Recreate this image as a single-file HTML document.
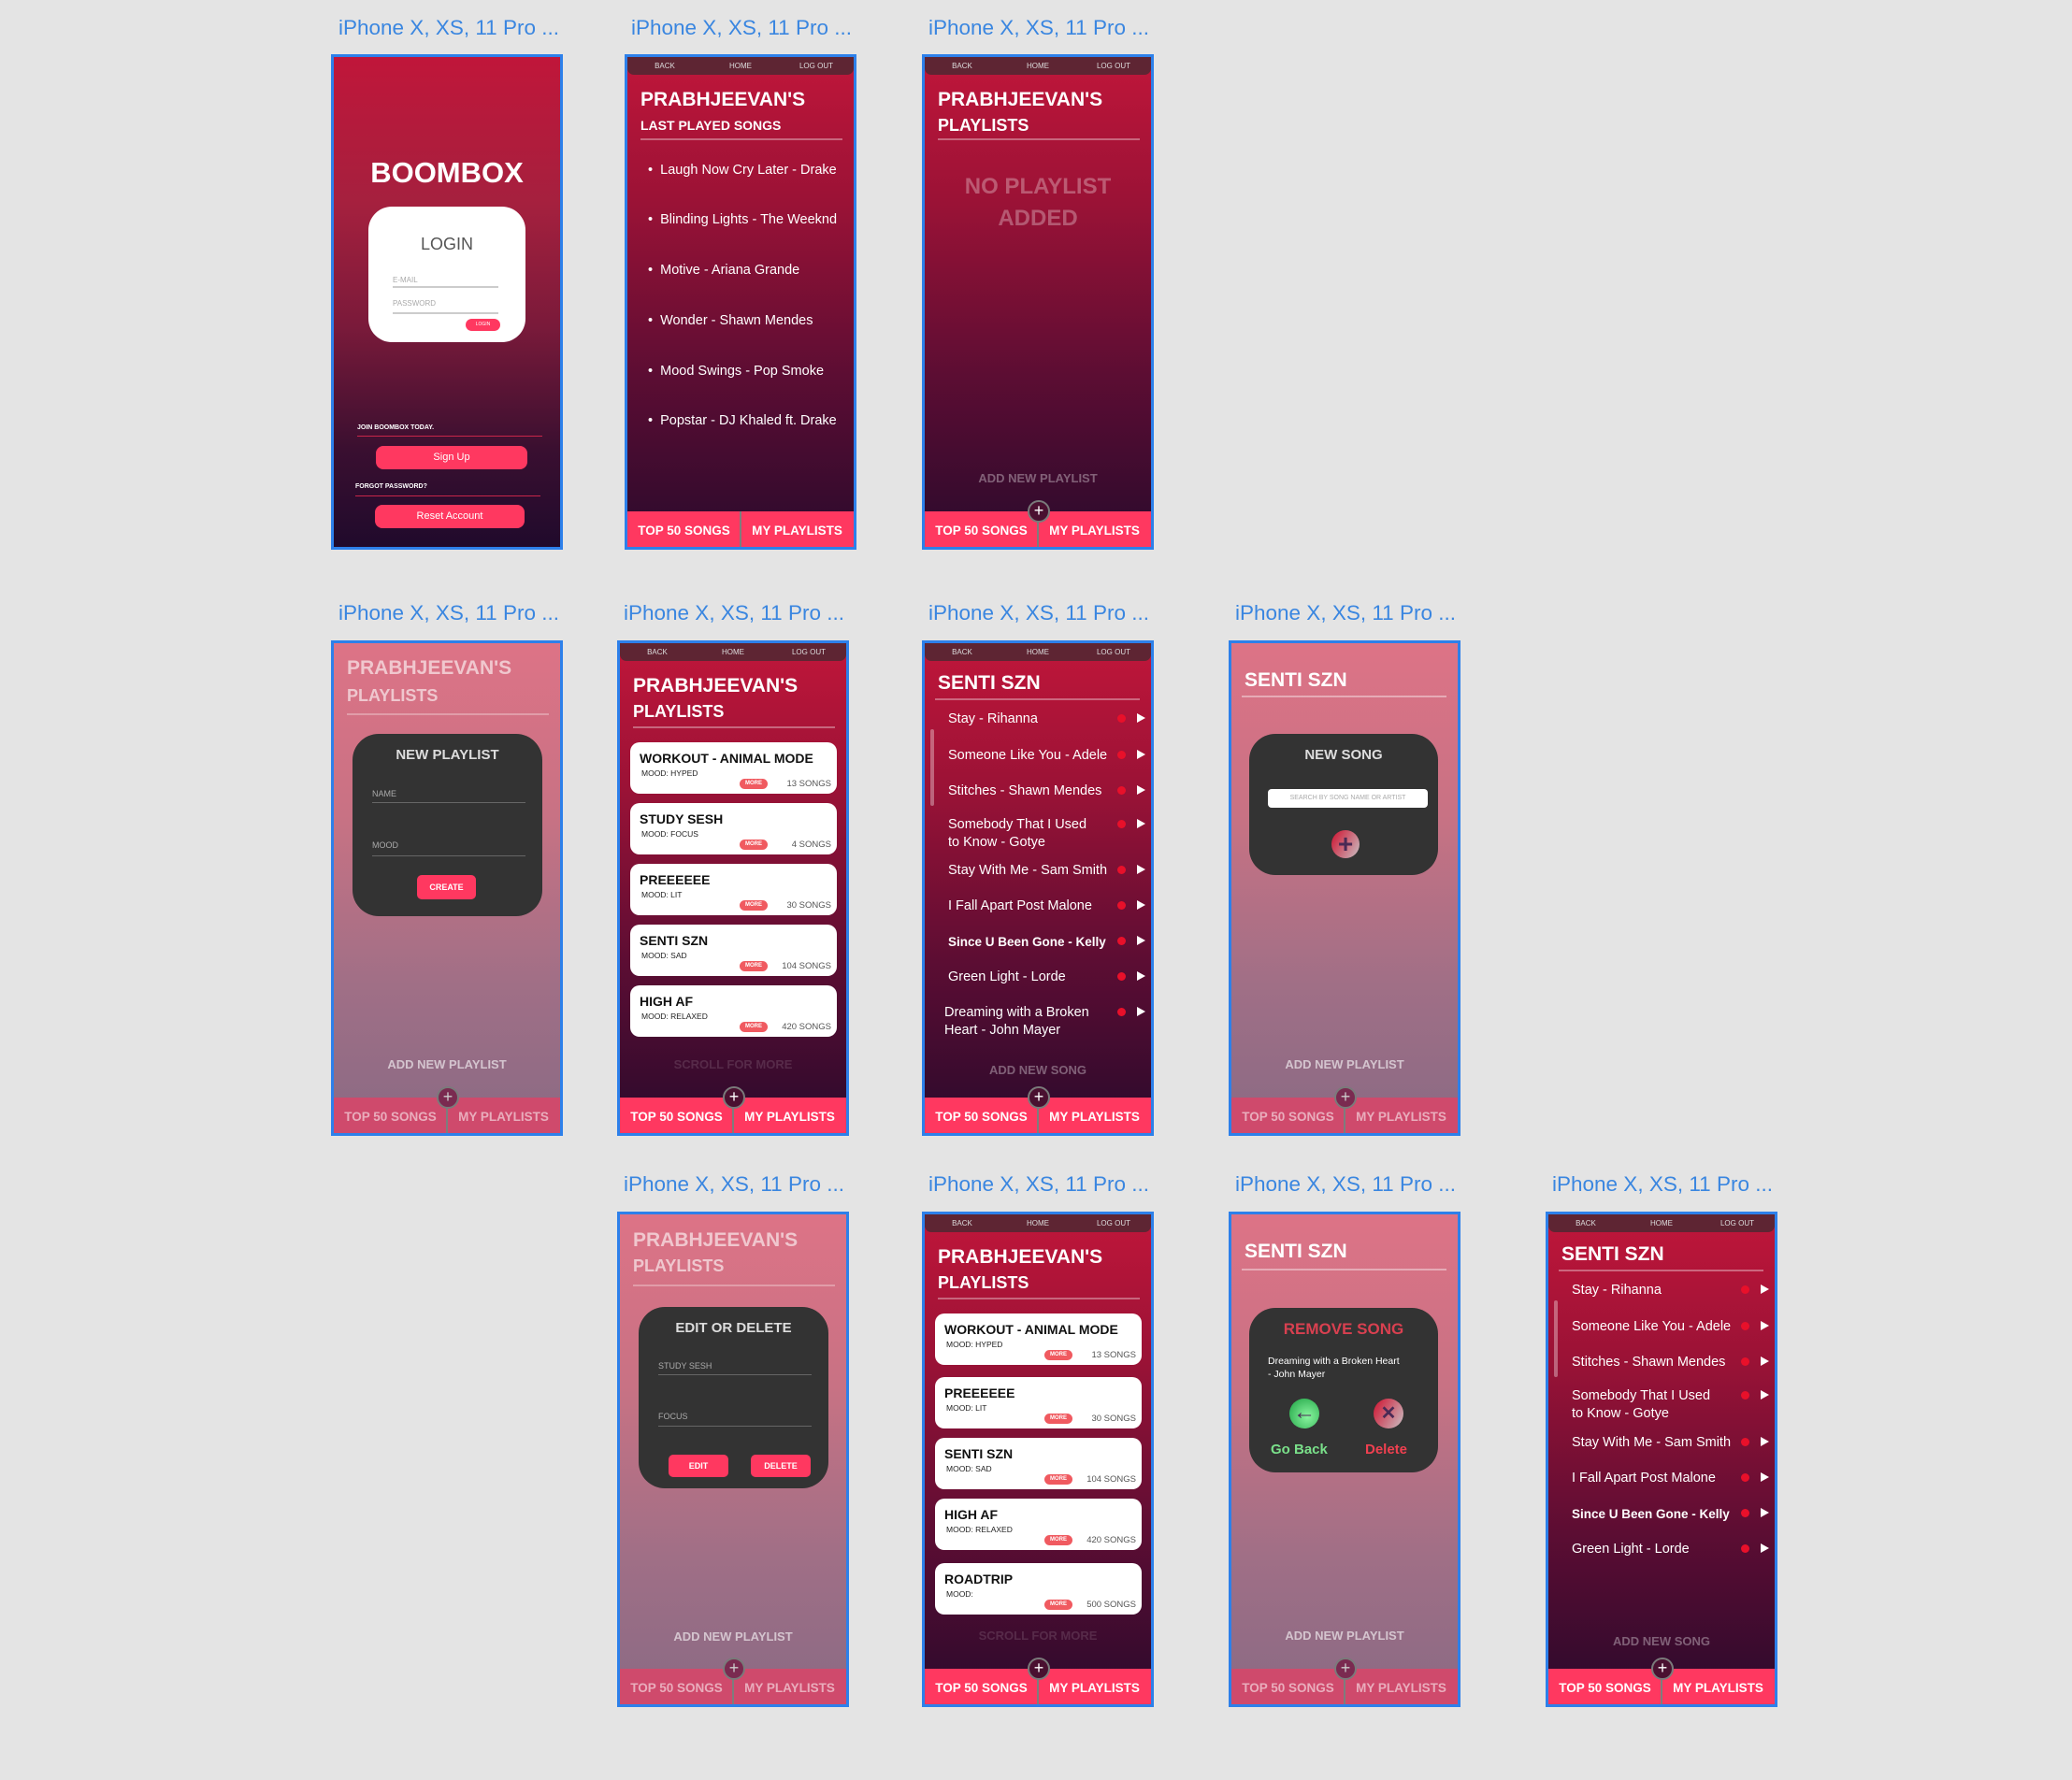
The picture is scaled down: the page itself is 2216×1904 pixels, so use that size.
<!DOCTYPE html>
<html><head><meta charset="utf-8"><style>
*{margin:0;padding:0;box-sizing:border-box}
body{width:2216px;height:1904px;background:#e4e4e4;position:relative;overflow:hidden;font-family:"Liberation Sans",sans-serif}
.lb{position:absolute;font-size:22.5px;color:#3a86e0;white-space:nowrap}
.f{position:absolute;width:248px;height:530px;border:3px solid #2d80ea;overflow:hidden;background:linear-gradient(#c0163a 0%,#9a1236 30%,#5c0d33 65%,#2a0a2c 100%)}
.fd{background:linear-gradient(#dd7386 0%,#c87284 35%,#a06f86 70%,#8a6a84 100%)}
.f div,.f span{position:absolute;white-space:nowrap}
.nav{left:0;top:0;width:242px;height:19px;background:#5e2533;border-radius:0 0 7px 7px;font-size:8px;color:#ddd}
.nav span{top:5px;width:80px;text-align:center}
.t{left:14px;font-size:21px;font-weight:bold;color:#fff;line-height:24px}
.st{left:14px;font-size:18px;font-weight:bold;color:#fff;line-height:20px}
.ln{left:14px;width:216px;height:2px;background:rgba(255,255,255,.35)}
.bb{left:0;top:486px;width:242px;height:40px;background:#ff3860;font-size:13.5px;font-weight:bold;color:#fff}
.bb span{top:13px;width:121px;text-align:center}
.bb i{position:absolute;left:120px;top:0;width:2px;height:40px;background:#7d7d7d}
.fd .bb{background:#cf4a6c;color:rgba(255,255,255,.55)}
.pc{left:110px;top:474px;width:24px;height:24px;border-radius:50%;background:#4a1030;border:2px solid #7a7a7a;color:#fff;font-size:18px;line-height:19px;text-align:center}
.fd .pc{background:#7a2a50;color:#ccc}
.add{left:0;width:242px;text-align:center;font-size:13px;font-weight:bold;color:rgba(255,255,255,.35)}
.fd .add{color:rgba(255,255,255,.6)}
.card{left:11px;width:221px;height:55px;background:#fff;border-radius:10px}
.card b{position:absolute;left:10px;top:9px;font-size:14px;color:#111;white-space:nowrap}
.card i{position:absolute;left:12px;top:28px;font-size:8.5px;font-style:normal;color:#222}
.card s{position:absolute;left:117px;top:39px;width:30px;height:11px;border-radius:6px;background:#f05a60;color:#fff;font-size:6px;text-decoration:none;text-align:center;line-height:11px;font-weight:bold}
.card u{position:absolute;right:6px;top:39px;font-size:9.5px;color:#555;text-decoration:none}
.sg{left:25px;font-size:14.5px;color:#fff;line-height:19px}
.sg.k{font-size:13.5px}
.rd{left:206px;width:9px;height:9px;border-radius:50%;background:#e8102a}
.pl{left:227px;width:0;height:0;border-left:9px solid #fff;border-top:5px solid transparent;border-bottom:5px solid transparent}
.md{background:#333;border-radius:28px}
.mh{left:0;width:100%;text-align:center;font-size:15px;font-weight:bold;color:#ddd}
.in{font-size:9px;color:#aaa}
.il{height:1px;background:#666}
.btn{background:#ff3860;border-radius:5px;color:#fff;font-size:9px;font-weight:bold;text-align:center}
.scr{left:0;width:242px;text-align:center;font-size:13px;font-weight:bold;color:rgba(255,255,255,.13)}
</style></head><body>

<div class="lb" style="left:362px;top:17px">iPhone X, XS, 11 Pro ...</div>
<div class="lb" style="left:675px;top:17px">iPhone X, XS, 11 Pro ...</div>
<div class="lb" style="left:993px;top:17px">iPhone X, XS, 11 Pro ...</div>
<div class="lb" style="left:362px;top:643px">iPhone X, XS, 11 Pro ...</div>
<div class="lb" style="left:667px;top:643px">iPhone X, XS, 11 Pro ...</div>
<div class="lb" style="left:993px;top:643px">iPhone X, XS, 11 Pro ...</div>
<div class="lb" style="left:1321px;top:643px">iPhone X, XS, 11 Pro ...</div>
<div class="lb" style="left:667px;top:1254px">iPhone X, XS, 11 Pro ...</div>
<div class="lb" style="left:993px;top:1254px">iPhone X, XS, 11 Pro ...</div>
<div class="lb" style="left:1321px;top:1254px">iPhone X, XS, 11 Pro ...</div>
<div class="lb" style="left:1660px;top:1254px">iPhone X, XS, 11 Pro ...</div>

<!-- R1 F1 login -->
<div class="f" style="left:354px;top:58px;background:linear-gradient(#c0163a 0%,#a5203e 30%,#7a1a3a 55%,#3a0f30 80%,#200a2c 100%)">
 <div style="left:0;width:242px;top:106px;text-align:center;font-size:31px;font-weight:bold;color:#fff">BOOMBOX</div>
 <div style="left:37px;top:160px;width:168px;height:145px;background:#fff;border-radius:25px">
  <span style="left:0;width:168px;top:30px;text-align:center;font-size:18px;color:#555">LOGIN</span>
  <span style="left:26px;top:74px;font-size:8px;color:#aaa">E-MAIL</span>
  <span style="left:26px;top:85px;width:113px;height:2px;background:#ccc"></span>
  <span style="left:26px;top:99px;font-size:8px;color:#aaa">PASSWORD</span>
  <span style="left:26px;top:113px;width:113px;height:2px;background:#ccc"></span>
  <span style="left:104px;top:120px;width:37px;height:13px;border-radius:7px;background:#ff3860;color:#fff;font-size:5px;text-align:center;line-height:13px">LOGIN</span>
 </div>
 <div style="left:25px;top:393px;font-size:7px;font-weight:bold;color:#fff">JOIN BOOMBOX TODAY.</div>
 <div style="left:25px;top:405px;width:198px;height:1px;background:#c8264a"></div>
 <div style="left:45px;top:416px;width:162px;height:25px;border-radius:8px;background:#ff3860;color:#fff;font-size:11px;text-align:center;line-height:25px">Sign Up</div>
 <div style="left:23px;top:456px;font-size:7px;font-weight:bold;color:#fff">FORGOT PASSWORD?</div>
 <div style="left:23px;top:469px;width:198px;height:1px;background:#c8264a"></div>
 <div style="left:44px;top:479px;width:160px;height:25px;border-radius:8px;background:#ff3860;color:#fff;font-size:11px;text-align:center;line-height:25px">Reset Account</div>
</div>

<!-- R1 F2 last played -->
<div class="f" style="left:668px;top:58px">
 <div class="nav"><span style="left:0">BACK</span><span style="left:81px">HOME</span><span style="left:162px">LOG OUT</span></div>
 <div class="t" style="top:34px">PRABHJEEVAN'S</div>
 <div class="st" style="top:63px;font-size:14px">LAST PLAYED SONGS</div>
 <div class="ln" style="top:87px"></div>
 <div class="sg" style="left:22px;top:112px">• &nbsp;Laugh Now Cry Later - Drake</div>
 <div class="sg" style="left:22px;top:165px">• &nbsp;Blinding Lights - The Weeknd</div>
 <div class="sg" style="left:22px;top:219px">• &nbsp;Motive - Ariana Grande</div>
 <div class="sg" style="left:22px;top:273px">• &nbsp;Wonder - Shawn Mendes</div>
 <div class="sg" style="left:22px;top:327px">• &nbsp;Mood Swings - Pop Smoke</div>
 <div class="sg" style="left:22px;top:380px">• &nbsp;Popstar - DJ Khaled ft. Drake</div>
 <div class="bb"><span style="left:0">TOP 50 SONGS</span><i></i><span style="left:121px">MY PLAYLISTS</span></div>
</div>

<!-- R1 F3 no playlist -->
<div class="f" style="left:986px;top:58px">
 <div class="nav"><span style="left:0">BACK</span><span style="left:81px">HOME</span><span style="left:162px">LOG OUT</span></div>
 <div class="t" style="top:34px">PRABHJEEVAN'S</div>
 <div class="st" style="top:63px">PLAYLISTS</div>
 <div class="ln" style="top:87px"></div>
 <div style="left:0;width:242px;top:122px;text-align:center;font-size:24px;font-weight:bold;color:rgba(255,255,255,.3);line-height:34px">NO PLAYLIST<br>ADDED</div>
 <div class="add" style="top:443px">ADD NEW PLAYLIST</div>
 <div class="bb"><span style="left:0">TOP 50 SONGS</span><i></i><span style="left:121px">MY PLAYLISTS</span></div>
 <div class="pc">+</div>
</div>

<!-- R2 F1 new playlist -->
<div class="f fd" style="left:354px;top:685px">
 <div class="t" style="top:15px;color:rgba(255,255,255,.6)">PRABHJEEVAN'S</div>
 <div class="st" style="top:46px;color:rgba(255,255,255,.6)">PLAYLISTS</div>
 <div class="ln" style="top:75px;background:rgba(255,255,255,.3)"></div>
 <div class="md" style="left:20px;top:97px;width:203px;height:195px">
  <span class="mh" style="top:14px">NEW PLAYLIST</span>
  <span class="in" style="left:21px;top:59px">NAME</span><span class="il" style="left:21px;top:73px;width:164px"></span>
  <span class="in" style="left:21px;top:114px">MOOD</span><span class="il" style="left:21px;top:130px;width:164px"></span>
  <span class="btn" style="left:69px;top:151px;width:63px;height:26px;line-height:26px">CREATE</span>
 </div>
 <div class="add" style="top:443px">ADD NEW PLAYLIST</div>
 <div class="bb"><span style="left:0">TOP 50 SONGS</span><i></i><span style="left:121px">MY PLAYLISTS</span></div>
 <div class="pc">+</div>
</div>

<!-- R2 F2 playlists -->
<div class="f" style="left:660px;top:685px">
 <div class="nav"><span style="left:0">BACK</span><span style="left:81px">HOME</span><span style="left:162px">LOG OUT</span></div>
 <div class="t" style="top:34px">PRABHJEEVAN'S</div>
 <div class="st" style="top:63px">PLAYLISTS</div>
 <div class="ln" style="top:89px"></div>
 <div class="card" style="top:106px"><b>WORKOUT - ANIMAL MODE</b><i>MOOD: HYPED</i><s>MORE</s><u>13 SONGS</u></div>
 <div class="card" style="top:171px"><b>STUDY SESH</b><i>MOOD: FOCUS</i><s>MORE</s><u>4 SONGS</u></div>
 <div class="card" style="top:236px"><b>PREEEEEE</b><i>MOOD: LIT</i><s>MORE</s><u>30 SONGS</u></div>
 <div class="card" style="top:301px"><b>SENTI SZN</b><i>MOOD: SAD</i><s>MORE</s><u>104 SONGS</u></div>
 <div class="card" style="top:366px"><b>HIGH AF</b><i>MOOD: RELAXED</i><s>MORE</s><u>420 SONGS</u></div>
 <div class="scr" style="top:443px">SCROLL FOR MORE</div>
 <div class="bb"><span style="left:0">TOP 50 SONGS</span><i></i><span style="left:121px">MY PLAYLISTS</span></div>
 <div class="pc">+</div>
</div>

<!-- R2 F3 senti szn -->
<div class="f" style="left:986px;top:685px">
 <div class="nav"><span style="left:0">BACK</span><span style="left:81px">HOME</span><span style="left:162px">LOG OUT</span></div>
 <div class="t" style="top:31px">SENTI SZN</div>
 <div class="ln" style="top:59px;left:11px;width:219px"></div>
 <div style="left:6px;top:92px;width:4px;height:82px;border-radius:2px;background:rgba(255,255,255,.35)"></div>
 <div class="sg" style="top:72px">Stay - Rihanna</div><div class="rd" style="top:76px"></div><div class="pl" style="top:75px"></div>
 <div class="sg" style="top:111px">Someone Like You - Adele</div><div class="rd" style="top:115px"></div><div class="pl" style="top:114px"></div>
 <div class="sg" style="top:149px">Stitches - Shawn Mendes</div><div class="rd" style="top:153px"></div><div class="pl" style="top:152px"></div>
 <div class="sg" style="top:185px">Somebody That I Used<br>to Know - Gotye</div><div class="rd" style="top:189px"></div><div class="pl" style="top:188px"></div>
 <div class="sg" style="top:234px">Stay With Me - Sam Smith</div><div class="rd" style="top:238px"></div><div class="pl" style="top:237px"></div>
 <div class="sg" style="top:272px">I Fall Apart Post Malone</div><div class="rd" style="top:276px"></div><div class="pl" style="top:275px"></div>
 <div class="sg k" style="top:310px;font-weight:bold">Since U Been Gone - Kelly</div><div class="rd" style="top:314px"></div><div class="pl" style="top:313px"></div>
 <div class="sg" style="top:348px">Green Light - Lorde</div><div class="rd" style="top:352px"></div><div class="pl" style="top:351px"></div>
 <div class="sg" style="top:386px;left:21px">Dreaming with a Broken<br>Heart - John Mayer</div><div class="rd" style="top:390px"></div><div class="pl" style="top:389px"></div>
 <div class="add" style="top:449px">ADD NEW SONG</div>
 <div class="bb"><span style="left:0">TOP 50 SONGS</span><i></i><span style="left:121px">MY PLAYLISTS</span></div>
 <div class="pc">+</div>
</div>

<!-- R2 F4 new song -->
<div class="f fd" style="left:1314px;top:685px">
 <div class="t" style="top:28px">SENTI SZN</div>
 <div class="ln" style="top:56px;left:11px;width:219px;background:rgba(255,255,255,.4)"></div>
 <div class="md" style="left:19px;top:97px;width:202px;height:151px">
  <span class="mh" style="top:14px">NEW SONG</span>
  <span style="left:20px;top:59px;width:171px;height:20px;background:#fff;border-radius:4px;font-size:7px;color:#aaa;text-align:center;line-height:20px">SEARCH BY SONG NAME OR ARTIST</span>
  <span style="left:88px;top:103px;width:30px;height:30px;border-radius:50%;background:linear-gradient(120deg,#d0102e,#c9c0c4);color:#4a2a55;font-size:28px;font-weight:bold;text-align:center;line-height:30px">+</span>
 </div>
 <div class="add" style="top:443px">ADD NEW PLAYLIST</div>
 <div class="bb"><span style="left:0">TOP 50 SONGS</span><i></i><span style="left:121px">MY PLAYLISTS</span></div>
 <div class="pc">+</div>
</div>

<!-- R3 F2 edit or delete -->
<div class="f fd" style="left:660px;top:1296px">
 <div class="t" style="top:16px;color:rgba(255,255,255,.6)">PRABHJEEVAN'S</div>
 <div class="st" style="top:45px;color:rgba(255,255,255,.6)">PLAYLISTS</div>
 <div class="ln" style="top:75px;background:rgba(255,255,255,.3)"></div>
 <div class="md" style="left:20px;top:99px;width:203px;height:194px">
  <span class="mh" style="top:14px">EDIT OR DELETE</span>
  <span class="in" style="left:21px;top:58px">STUDY SESH</span><span class="il" style="left:21px;top:72px;width:164px"></span>
  <span class="in" style="left:21px;top:112px">FOCUS</span><span class="il" style="left:21px;top:127px;width:164px"></span>
  <span class="btn" style="left:32px;top:158px;width:64px;height:24px;line-height:24px">EDIT</span>
  <span class="btn" style="left:120px;top:158px;width:64px;height:24px;line-height:24px">DELETE</span>
 </div>
 <div class="add" style="top:444px">ADD NEW PLAYLIST</div>
 <div class="bb"><span style="left:0">TOP 50 SONGS</span><i></i><span style="left:121px">MY PLAYLISTS</span></div>
 <div class="pc">+</div>
</div>

<!-- R3 F3 playlists w/ roadtrip -->
<div class="f" style="left:986px;top:1296px">
 <div class="nav"><span style="left:0">BACK</span><span style="left:81px">HOME</span><span style="left:162px">LOG OUT</span></div>
 <div class="t" style="top:34px">PRABHJEEVAN'S</div>
 <div class="st" style="top:63px">PLAYLISTS</div>
 <div class="ln" style="top:89px"></div>
 <div class="card" style="top:106px"><b>WORKOUT - ANIMAL MODE</b><i>MOOD: HYPED</i><s>MORE</s><u>13 SONGS</u></div>
 <div class="card" style="top:174px"><b>PREEEEEE</b><i>MOOD: LIT</i><s>MORE</s><u>30 SONGS</u></div>
 <div class="card" style="top:239px"><b>SENTI SZN</b><i>MOOD: SAD</i><s>MORE</s><u>104 SONGS</u></div>
 <div class="card" style="top:304px"><b>HIGH AF</b><i>MOOD: RELAXED</i><s>MORE</s><u>420 SONGS</u></div>
 <div class="card" style="top:373px"><b>ROADTRIP</b><i>MOOD:</i><s>MORE</s><u>500 SONGS</u></div>
 <div class="scr" style="top:443px">SCROLL FOR MORE</div>
 <div class="bb"><span style="left:0">TOP 50 SONGS</span><i></i><span style="left:121px">MY PLAYLISTS</span></div>
 <div class="pc">+</div>
</div>

<!-- R3 F4 remove song -->
<div class="f fd" style="left:1314px;top:1296px">
 <div class="t" style="top:28px">SENTI SZN</div>
 <div class="ln" style="top:58px;left:11px;width:219px;background:rgba(255,255,255,.4)"></div>
 <div class="md" style="left:19px;top:100px;width:202px;height:176px">
  <span class="mh" style="top:13px;color:#d94050;font-size:17px">REMOVE SONG</span>
  <span style="left:20px;top:50px;font-size:10.5px;color:#fff;line-height:14px">Dreaming with a Broken Heart<br>- John Mayer</span>
  <span style="left:43px;top:97px;width:32px;height:32px;border-radius:50%;background:radial-gradient(circle at 60% 60%,#8af5a0,#1aa040);color:#4a2a55;font-size:24px;font-weight:bold;text-align:center;line-height:30px">&#8592;</span>
  <span style="left:133px;top:97px;width:32px;height:32px;border-radius:50%;background:linear-gradient(120deg,#d0102e,#c9c0c4);color:#4a2a55;font-size:20px;font-weight:bold;text-align:center;line-height:32px">&#10005;</span>
  <span style="left:23px;top:143px;font-size:15px;font-weight:bold;color:#7ae08a">Go Back</span>
  <span style="left:124px;top:143px;font-size:15px;font-weight:bold;color:#f04050">Delete</span>
 </div>
 <div class="add" style="top:443px">ADD NEW PLAYLIST</div>
 <div class="bb"><span style="left:0">TOP 50 SONGS</span><i></i><span style="left:121px">MY PLAYLISTS</span></div>
 <div class="pc">+</div>
</div>

<!-- R3 F5 senti szn -->
<div class="f" style="left:1653px;top:1296px">
 <div class="nav"><span style="left:0">BACK</span><span style="left:81px">HOME</span><span style="left:162px">LOG OUT</span></div>
 <div class="t" style="top:31px">SENTI SZN</div>
 <div class="ln" style="top:59px;left:11px;width:219px"></div>
 <div style="left:6px;top:92px;width:4px;height:82px;border-radius:2px;background:rgba(255,255,255,.35)"></div>
 <div class="sg" style="top:72px">Stay - Rihanna</div><div class="rd" style="top:76px"></div><div class="pl" style="top:75px"></div>
 <div class="sg" style="top:111px">Someone Like You - Adele</div><div class="rd" style="top:115px"></div><div class="pl" style="top:114px"></div>
 <div class="sg" style="top:149px">Stitches - Shawn Mendes</div><div class="rd" style="top:153px"></div><div class="pl" style="top:152px"></div>
 <div class="sg" style="top:185px">Somebody That I Used<br>to Know - Gotye</div><div class="rd" style="top:189px"></div><div class="pl" style="top:188px"></div>
 <div class="sg" style="top:235px">Stay With Me - Sam Smith</div><div class="rd" style="top:239px"></div><div class="pl" style="top:238px"></div>
 <div class="sg" style="top:273px">I Fall Apart Post Malone</div><div class="rd" style="top:277px"></div><div class="pl" style="top:276px"></div>
 <div class="sg k" style="top:311px;font-weight:bold">Since U Been Gone - Kelly</div><div class="rd" style="top:315px"></div><div class="pl" style="top:314px"></div>
 <div class="sg" style="top:349px">Green Light - Lorde</div><div class="rd" style="top:353px"></div><div class="pl" style="top:352px"></div>
 <div class="add" style="top:449px">ADD NEW SONG</div>
 <div class="bb"><span style="left:0">TOP 50 SONGS</span><i></i><span style="left:121px">MY PLAYLISTS</span></div>
 <div class="pc">+</div>
</div>

</body></html>
